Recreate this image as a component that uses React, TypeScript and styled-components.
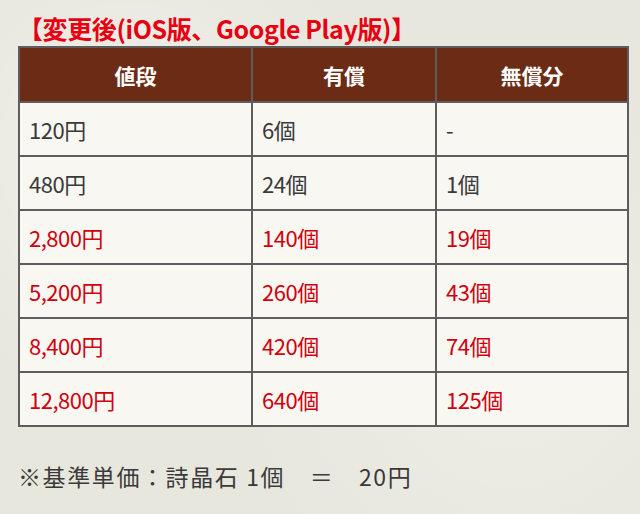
import React from "react";
import styled, { createGlobalStyle } from "styled-components";

const Global = createGlobalStyle`
  html, body {
    margin: 0;
    padding: 0;
    background: #e9e8df;
  }
  body {
    font-family: "Noto Sans CJK JP", "Noto Sans", sans-serif;
    color: #333;
  }
`;

const Page = styled.div`
  width: 640px;
  height: 514px;
  box-sizing: border-box;
  padding: 11px 18px 0 18px;
  background:
    radial-gradient(circle at 20% 30%, rgba(255,255,255,0.35), transparent 40%),
    radial-gradient(circle at 80% 70%, rgba(255,255,255,0.25), transparent 45%),
    #e8e7de;
  overflow: hidden;
`;

const Title = styled.h2`
  margin: 0;
  font-size: 25px;
  line-height: 35px;
  font-weight: 700;
  color: #e60012;
  letter-spacing: -0.4px;
`;

const Table = styled.table`
  width: 603px;
  border-collapse: collapse;
  table-layout: fixed;
  border: 2px solid #5d5d5d;
`;

const HeadCell = styled.th<{ $w: number }>`
  width: ${(p) => p.$w}px;
  height: 53px;
  background: #6c2b15;
  color: #fff;
  font-size: 21px;
  font-weight: 700;
  text-align: center;
  border: 2px solid #5d5d5d;
  padding: 0;
`;

const Cell = styled.td<{ $red?: boolean }>`
  height: 52px;
  background: #f8f7f2;
  color: ${(p) => (p.$red ? "#d0000f" : "#3a3a3a")};
  font-size: 22px;
  border: 2px solid #5d5d5d;
  padding: 0 0 0 9px;
  text-align: left;
  letter-spacing: -0.5px;
`;

const Note = styled.p`
  margin: 32px 0 0 0;
  font-size: 23px;
  color: #3a3a3a;
  letter-spacing: 1.6px;
  white-space: pre;
`;

const rows: { cells: string[]; red?: boolean }[] = [
  { cells: ["120円", "6個", "-"] },
  { cells: ["480円", "24個", "1個"] },
  { cells: ["2,800円", "140個", "19個"], red: true },
  { cells: ["5,200円", "260個", "43個"], red: true },
  { cells: ["8,400円", "420個", "74個"], red: true },
  { cells: ["12,800円", "640個", "125個"], red: true },
];

export default function App() {
  return (
    <Page>
      <Global />
      <Title>【変更後(iOS版、Google Play版)】</Title>
      <Table>
        <thead>
          <tr>
            <HeadCell $w={231}>値段</HeadCell>
            <HeadCell $w={182}>有償</HeadCell>
            <HeadCell $w={190}>無償分</HeadCell>
          </tr>
        </thead>
        <tbody>
          {rows.map((r, i) => (
            <tr key={i}>
              {r.cells.map((c, j) => (
                <Cell key={j} $red={r.red}>
                  {c}
                </Cell>
              ))}
            </tr>
          ))}
        </tbody>
      </Table>
      <Note>{"※基準単価：詩晶石 1個　＝　20円"}</Note>
    </Page>
  );
}
